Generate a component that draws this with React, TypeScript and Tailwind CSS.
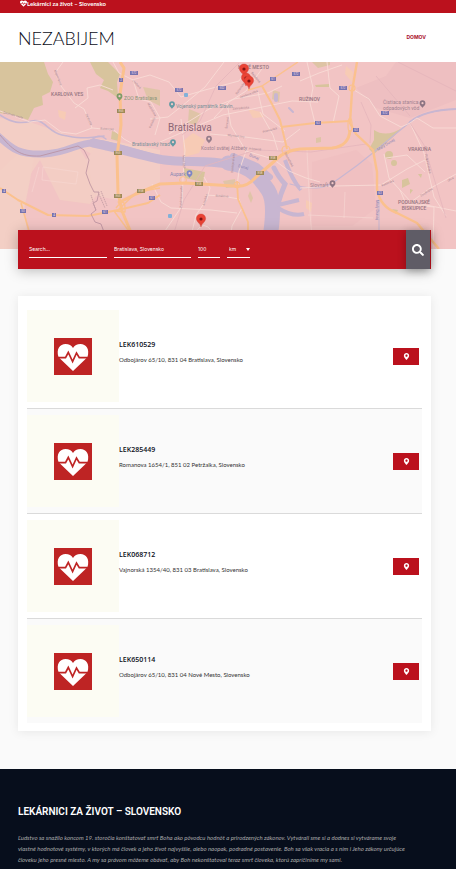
import { FaHeartbeat, FaMapMarkerAlt, FaSearch } from "react-icons/fa";

const places = [
  { id: "LEK610529", address: "Odbojárov 65/10, 831 04 Bratislava, Slovensko" },
  { id: "LEK285449", address: "Romanova 1654/1, 851 02 Petržalka, Slovensko" },
  { id: "LEK068712", address: "Vajnorská 1354/40, 831 03 Bratislava, Slovensko" },
  { id: "LEK650114", address: "Odbojárov 65/10, 831 04 Nové Mesto, Slovensko" },
];

const pins = [
  [244, 78],
  [246, 87],
  [249, 90],
  [201, 228],
];

// [x, y, label]
const blueSigns: [number, number, string][] = [
  [134, 73, "572"],
  [121, 80, "2"],
  [179, 90, "572"],
  [222, 88, "502"],
  [273, 79, "61"],
  [296, 74, "572"],
  [343, 88, "572"],
  [385, 113, "572"],
  [318, 123, "63"],
  [356, 130, "63"],
  [380, 193, "63"],
  [4, 191, "4"],
  [23, 211, "50"],
  [54, 215, "4"],
  [105, 212, "61"],
  [152, 198, "61"],
];

const greenSigns: [number, number, string][] = [
  [121, 111, "E65"],
  [118, 153, "E65"],
  [118, 196, "E65"],
  [141, 191, "E58"],
  [199, 184, "E58"],
  [260, 173, "E58"],
  [273, 158, "E58"],
];

// [x, y, rotation, name]
const streets: [number, number, number, string][] = [
  [57, 78, 68, "Majerníkova"],
  [88, 120, 66, "Devínska"],
  [107, 130, 4, "Botanická"],
  [13, 116, 16, "Devínska cesta"],
  [136, 85, 45, "Limbová"],
  [151, 110, 60, "Mudroňova"],
  [153, 123, -66, "Palisády"],
  [241, 89, -55, "Račianska"],
  [255, 78, 50, "Bajkalská"],
  [249, 95, -20, "Jarošova ulica"],
  [241, 109, -5, "Zahradnícka"],
  [228, 123, -82, "Šancová"],
  [236, 137, 6, "Mlynské nivy"],
  [270, 131, -15, "Prievozská"],
  [255, 150, 3, "Prístavná"],
  [288, 160, 62, "Slovnaftská"],
  [183, 162, 88, "Most SNP"],
  [234, 163, -84, "Dostojevského"],
  [182, 197, -88, "Panónska cesta"],
  [206, 200, -74, "Antolská"],
  [222, 197, 3, "Bosákova"],
  [388, 184, -22, "Kazanská"],
  [427, 193, -32, "Dvojkrížna"],
  [451, 180, -30, "Ulica"],
  [427, 164, 78, "Podpriehradná"],
];

function MapPin({ x, y }: { x: number; y: number }) {
  return (
    <g transform={`translate(${x} ${y})`}>
      <path
        d="M0 0C-.5-3.6-4.6-5-4.6-8.4a4.6 4.6 0 0 1 9.2 0C4.6-5 .5-3.6 0 0Z"
        transform="translate(0 -1)"
        fill="#ea4335"
        stroke="#cc3a32"
        strokeWidth=".4"
      />
      <circle cy="-9" r="1.6" fill="#7f1312" />
    </g>
  );
}

function PoiPin({ x, y, color }: { x: number; y: number; color: string }) {
  return (
    <g transform={`translate(${x} ${y})`} fill={color}>
      <path d="M0 4C-.4 2.3-2.9 1.8-2.9-.8a2.9 2.9 0 0 1 5.8 0C2.9 1.8.4 2.3 0 4Z" />
      <circle cy="-.8" r="1.1" fill="#f3c9c7" />
    </g>
  );
}

function CityMap() {
  return (
    <svg
      viewBox="0 62 456 187"
      preserveAspectRatio="xMidYMid slice"
      className="block aspect-[456/187] w-full"
      fontFamily="Roboto, sans-serif"
      role="img"
      aria-label="Bratislava"
    >
      <rect y="62" width="456" height="187" fill="#f2c4c4" />
      <path d="M0 118 30 122 70 136 108 140 160 150V180L135 190 98 158 78 146 50 156 20 148 0 138Z" fill="#f3cec5" />
      <path d="M0 140 30 156 78 146 90 166 96 196 90 204 60 200 40 160 30 175 22 196 28 249H0Z" fill="#f3cdc4" />
      <path d="M95 148 160 158V184L136 192 118 200 96 196 86 160Z" fill="#f3cdc6" />
      <path d="M396 62 386 76 356 88 376 108 410 118 456 100V62Z" fill="#eebfc1" />
      <path d="M312 162 356 150 372 164 376 208 352 226H312Z" fill="#f0c0c1" />
      <path d="M0 170 22 150 34 158 30 180 24 210 30 249H0Z" fill="#f3cfc5" />

      <g fill="#d8c49d">
        <path d="M0 62H44L48 74 53 82 50 92 42 96 43 105 34 108 28 120 17 116 0 113Z" />
        <path d="M90 62H108L120 74 117 82 118 98 108 91 100 88 104 80 96 74Z" />
        <path d="M112 131 119 134 118 141 111 139Z" />
        <path d="M143 87 160 90V106L148 100Z" opacity=".7" />
        <path d="M189 109 201 114 196 125 188 123Z" opacity=".75" />
        <path d="M184 168 205 172 203 182 185 178Z" />
        <path d="M273 90 280 92 279 102 272 99Z" opacity=".7" />
        <path d="M223 181 235 179 236 187 226 188Z" opacity=".7" />
        <path d="M250 191 253 198 251 203 248 196Z" opacity=".7" />
        <path d="M374 130Q386 138 402 128L392 138 374 154 369 149 374 140Z" />
        <circle cx="389" cy="155" r="4" />
        <circle cx="394" cy="163" r="3" />
        <path d="M402 180 408 178 410 184 402 188ZM410 189 413 190 410 194ZM418 174 422 174 421 178ZM392 209 398 210 396 214ZM315 85 329 84 329 87 316 87Z" />
        <path d="M312 62 330 62 330 65 318 68ZM316 138 321 137 321 142 316 143Z" opacity=".8" />
      </g>
      <g fill="#f7cbb5">
        <path d="M183 141 193 133 205 140 199 153 184 157Z" />
        <path d="M248 109 261 112 264 117 253 118Z" />
        <path d="M58 110 66 112 65 120 59 117Z" />
        <path d="M346 66 353 72 352 82 345 74Z" />
        <path d="M306 200 312 203 311 212 306 208Z" />
      </g>

      {/* water */}
      <g fill="none" stroke="#c8b6d1" strokeLinecap="round">
        <path d="M-3 135C12 149 19 155 44 154S76 143 93 143 136 153 160 159" strokeWidth="7" />
        <path d="M93 143C115 147 145 157 165 160S215 159 234 166" strokeWidth="9" />
        <path d="M228 163C250 165 260 178 268 190S272 232 266 256" strokeWidth="15" />
        <path d="M0 115C12 123 20 124 32 121S48 132 62 135 84 139 104 136" strokeWidth="1.6" />
        <path d="M90 142Q98 132 106 139" strokeWidth="1.4" />
        <path d="M233 156 257 166 270 177" strokeWidth="6" />
        <path d="M274 168Q279 178 285 184L281 194 278 204" strokeWidth="5" />
        <path d="M285 160Q292 180 301 190M278 205 299 200M278 208Q292 217 304 214" strokeWidth="4" strokeLinecap="butt" />
        <path d="M276 95V100" strokeWidth="4" />
        <path d="M289 108 293 112" strokeWidth="2" />
        <path d="M456 109C430 110 417 116 410 122S393 136 374 152 344 175 334 182 312 190 290 184" strokeWidth="1.2" />
        <path d="M456 109C430 110 417 116 410 122" strokeWidth="2" />
        <path d="M379 200V230" strokeWidth="1" />
      </g>

      {/* minor roads */}
      <g fill="none" stroke="#f8dbd6" strokeWidth=".9">
        <path d="M63 62 55 73 61 86 74 103 84 109 92 128 114 130 124 139 133 144" />
        <path d="M0 111 30 122 45 120 61 132 76 134 92 128" />
        <path d="M75 108 88 98 87 88 100 85 113 90" />
        <path d="M113 62 119 73 133 80 139 99 151 102 160 118 155 135" />
        <path d="M43 167 78 172 76 184 42 180ZM39 167 32 192" opacity=".5" />
        <path d="M132 80 150 75 169 82 181 97 205 90 239 81 251 64" />
        <path d="M150 119 168 117 182 106 205 87 224 62" />
        <path d="M169 134 188 122 209 109 234 99 268 93 282 86" />
        <path d="M160 142 190 129 223 115 292 101 318 102" />
        <path d="M181 119 185 150 183 178 182 206 165 231 155 249" />
        <path d="M227 103 231 126 246 151 239 171 237 186" />
        <path d="M210 134 245 137 283 142 300 129" />
        <path d="M214 118 229 102 246 91 264 66" />
        <path d="M246 151 273 159 289 171 306 178 320 182" />
        <path d="M260 112 273 135 278 151M258 92 263 114 285 131" />
        <path d="M152 184 161 202 171 208 211 210 237 213" />
        <path d="M204 177 210 188 207 199 196 215 188 249" />
        <path d="M205 195 222 196 239 199 242 208 232 226 229 249" />
        <path d="M188 249Q204 202 220 249" />
        <path d="M307 62 313 88 310 103 315 123M300 81 319 73 342 65M327 62 330 88 339 96 333 123" />
        <path d="M354 90 369 99 380 116 401 127 410 123 417 118 433 128 456 128" />
        <path d="M384 154 389 178 400 190 411 202 456 211" />
        <path d="M410 123 424 153 434 197 446 216M386 158 407 155 425 172" />
        <path d="M300 188 334 186 381 185 407 169 425 160" />
        <path d="M411 202 429 189 456 174M400 190 406 204 434 207 433 249" />
        <path d="M308 215 373 218M307 150 310 213 313 249" opacity=".6" />
        <path d="M345 192 344 218" opacity=".6" />
      </g>
      <g fill="none" stroke="#e5b5bb" strokeWidth=".8">
        <path d="M239 63 216 86 200 121 182 135" />
        <path d="M169 249 184 200 205 166 256 150 311 152 366 144" />
        <path d="M410 123 424 145 446 218" />
        <path d="M361 102 371 125 370 143M398 62 456 91M376 76 410 116" />
      </g>

      {/* motorways */}
      <g fill="none" stroke="#fbc18d" strokeLinejoin="round">
        <path d="M120 62 124 68 120 94 121 125 117 156 118 193 122 211 132 235" strokeWidth="3" />
        <path d="M0 188 18 200 48 215 88 216 118 210 148 203 160 195" strokeWidth="2" />
        <path d="M21 203 31 238" strokeWidth="1.6" />
        <path d="M118 203 136 194 160 184 185 183 234 186Q247 188 256 177L278 158Q285 151 300 149L332 148Q349 146 350 130" strokeWidth="3" />
        <path d="M118 210 137 192 160 188M116 208Q126 195 125 212L114 211 128 230" strokeWidth="1.4" />
        <path d="M262 86 272 104 280 120 287 149" strokeWidth="2" />
        <path d="M248 90 262 86 298 62" strokeWidth="1.5" />
        <path d="M281 127 315 123 350 121" strokeWidth="2" />
        <path d="M357 62 352 91 350 123 356 134 373 150 377 172 377 189Q380 207 397 213L417 223 439 249" strokeWidth="2.4" />
        <path d="M237 181 238 199 248 222 248 249" strokeWidth="1.8" />
        <circle cx="286" cy="150" r="4" strokeWidth="1.2" />
        <circle cx="352" cy="88" r="3" strokeWidth="1.2" />
        <circle cx="183" cy="180" r="3.4" strokeWidth="1" />
        <circle cx="237" cy="185" r="3" strokeWidth="1" />
        <ellipse cx="350" cy="125" rx="2" ry="7" strokeWidth="1.2" />
      </g>

      {/* state border */}
      <path
        d="M0 135C12 149 20 157 40 156L78 146 84 150 89 160 86 173 90 184 94 192 99 192 97 201 93 203 96 210 91 214 95 222 101 224 104 232"
        fill="none"
        stroke="#b98f9e"
        strokeWidth=".8"
      />
      <path d="M91 195 96 211M98 192 105 208M101 191 107 206" stroke="#c59fa6" strokeWidth=".9" strokeDasharray="1.5 .6" />

      {blueSigns.map(([x, y, label]) => (
        <g key={`${x}-${y}`}>
          <rect x={x - (label.length > 2 ? 4 : label.length > 1 ? 3 : 2)} y={y - 2} width={label.length > 2 ? 8 : label.length > 1 ? 6 : 4} height="4" fill="#7673ae" />
          <text x={x} y={y + 1} fontSize="3" textAnchor="middle" fill="#f0d9e3">{label}</text>
        </g>
      ))}
      {greenSigns.map(([x, y, label]) => (
        <g key={`${x}-${y}`}>
          <rect x={x - 4} y={y - 2} width="8" height="4" fill="#9d8a58" />
          <text x={x} y={y + 1} fontSize="3" textAnchor="middle" fill="#f3dfc8">{label}</text>
        </g>
      ))}
      {streets.map(([x, y, angle, name]) => (
        <text key={name + x} x={x} y={y} fontSize="3" textAnchor="middle" fill="#a98690" transform={`rotate(${angle} ${x} ${y})`}>
          {name}
        </text>
      ))}

      <g fill="#967480" fontSize="5" fontWeight="500">
        <text x="51" y="96">KARLOVA VES</text>
        <text x="238" y="69">NOVÉ MESTO</text>
        <text x="299" y="101">RUŽINOV</text>
        <text x="408" y="151">VRAKUŇA</text>
        <text x="414" y="204" textAnchor="middle">PODUNAJSKÉ</text>
        <text x="414" y="210" textAnchor="middle">BISKUPICE</text>
      </g>
      <text x="168" y="131" fontSize="10" fontWeight="400" fill="#8c6674">Bratislava</text>
      <g fill="#a18391" fontSize="5">
        <text x="201" y="150">Kostol svätej Alžbety</text>
        <text x="383" y="104">Čistiaca stanica</text>
        <text x="383" y="110">odpadových vôd</text>
        <text x="310" y="187">Slovnaft</text>
      </g>
      <g fontSize="5">
        <text x="124" y="100" fill="#8a9678">ZOO Bratislava</text>
        <text x="176" y="108" fill="#7a9199">Vojenský pamätník Slavín</text>
        <text x="132" y="146" fill="#7a9199">Bratislavský hrad</text>
        <text x="170" y="176" fill="#8585b3">Aupark</text>
      </g>
      <g fontSize="4" fill="#8c86b5">
        <text x="249" y="156" transform="rotate(22 249 156)">Dunaj</text>
        <text x="238" y="167" transform="rotate(14 238 167)">Dunaj</text>
        <text x="378" y="151" transform="rotate(-32 378 151)">Malý Dunaj</text>
        <text x="376" y="200" transform="rotate(90 376 200)">Malý Dunaj</text>
      </g>
      <PoiPin x={119.5} y={97} color="#7d9c68" />
      <PoiPin x={172} y={105} color="#649aa4" />
      <PoiPin x={173} y={143} color="#649aa4" />
      <PoiPin x={189.5} y={174} color="#7d86c5" />
      <PoiPin x={209} y={139.5} color="#967d8b" />
      <PoiPin x={422.5} y={104} color="#8d7483" />
      <PoiPin x={332.5} y={184} color="#8d7483" />
      <rect x="184" y="93" width="4" height="4" rx="1" fill="#83b1d8" />
      <rect x="168" y="214" width="4" height="4" rx="1" fill="#83b1d8" />

      {pins.map(([x, y]) => (
        <MapPin key={`${x}-${y}`} x={x} y={y} />
      ))}
    </svg>
  );
}

function HeartLogo() {
  return (
    <svg viewBox="0 0 38 37" className="h-[37px] w-[38px]" aria-hidden="true">
      <rect width="38" height="37" fill="#be2424" />
      <path d="M4.500 19C2 11 6 6 11.500 6 15 6 17.500 7.500 19 10 20.500 7.500 23 6 26.500 6 32 6 36 11 33.500 19L30 22.500 19 33 8 22.500Z" fill="#fff" />
      <path d="M3 19.700H11.500L14.300 14.500 18.600 23.500 22.500 15 25.300 19.700H35" fill="none" stroke="#be2424" strokeWidth="1.700" />
    </svg>
  );
}

export default function App() {
  return (
    <div className="bg-[#fafafa] font-['Lato',sans-serif] text-[6px] text-[#0a0d18]">
      <div className="flex h-[13px] items-start bg-[#bb111d] pl-5 font-bold leading-2 text-white">
        <FaHeartbeat className="size-[7px]" />
        <span>Lekárnici za život – Slovensko</span>
      </div>

      <header className="flex h-[49px] items-center justify-between bg-white pr-[30px] pl-[18px]">
        <a href="#" className="text-lg font-light">
          NEZABIJEM
        </a>
        <nav>
          <a href="#" className="block font-['Inter',sans-serif] text-[5px] font-bold text-[#a90f2b]">
            DOMOV
          </a>
        </nav>
      </header>

      <CityMap />

      <main className="pr-[25px] pb-[38px] pl-[18px]">
        <form
          className="relative -mt-[19px] flex h-[39px] items-center bg-[#bb111d] pr-px pl-[11px] font-['Inter',sans-serif] text-[5px] text-white shadow-[0_2px_12px_rgba(0,0,0,0.25)]"
          onSubmit={(e) => e.preventDefault()}
        >
          <div className="flex flex-1 gap-[7px]">
            <input
              aria-label="Search"
              placeholder="Search..."
              className="h-4 w-[78px] border-b border-white outline-none placeholder:text-white"
            />
            <input
              aria-label="Location"
              defaultValue="Bratislava, Slovensko"
              className="h-4 w-[77px] border-b border-white outline-none"
            />
            <input aria-label="Radius" defaultValue="100" className="h-4 w-[22px] border-b border-white outline-none" />
            <div className="relative">
              <select aria-label="Units" className="h-4 w-[23px] appearance-none border-b border-white pt-px pl-[2px] outline-none">
                <option>km</option>
                <option>mi</option>
              </select>
              <svg viewBox="0 0 4 3" className="pointer-events-none absolute top-[6px] right-0 h-[3px] w-1" aria-hidden="true">
                <path d="M0 0H4L2 3Z" fill="#fff" />
              </svg>
            </div>
          </div>
          <button
            type="submit"
            aria-label="Submit search"
            className="flex h-full w-6 items-center justify-center bg-[#5f5c66] shadow-[0_2px_8px_rgba(0,0,0,0.3)]"
          >
            <FaSearch className="size-3" />
          </button>
        </form>

        <ul className="mt-[27px] bg-white px-[9px] py-2 shadow-[0_1px_10px_rgba(0,0,0,0.08)]">
          {places.map((place) => (
            <li
              key={place.id}
              className="flex items-center border-b border-[#dadada] py-[6px] pr-[3px] last:border-b-0 even:bg-[#fafafa]"
            >
              <div className="flex size-[92px] items-center justify-center bg-[#fcfcf3]">
                <HeartLogo />
              </div>
              <div className="flex-1 pb-[6px]">
                <h3 className="font-['Open_Sans',sans-serif] text-[7px] leading-[14px] font-semibold">{place.id}</h3>
                <p className="leading-4 text-[#333]">{place.address}</p>
              </div>
              <button
                type="button"
                aria-label={`Show ${place.id} on map`}
                className="flex h-[17px] w-[26px] items-center justify-center bg-[#bb111d] text-white"
              >
                <FaMapMarkerAlt className="size-[7px]" />
              </button>
            </li>
          ))}
        </ul>
      </main>

      <footer className="bg-[#070e1c] pt-9 pr-[25px] pl-[18px] text-[#aaa]">
        <h2 className="font-['Roboto',sans-serif] text-[10px] leading-[14px] font-semibold text-white">
          LEKÁRNICI ZA ŽIVOT – SLOVENSKO
        </h2>
        <p className="mt-[13px] pb-1 leading-[11px] italic">
          Ľudstvo sa snažilo koncom 19. storočia konštatovať smrť Boha ako pôvodcu hodnôt a prirodzených zákonov. Vytvárali
          sme si a dodnes si vytvárame svoje
          <br />
          vlastné hodnotové systémy, v ktorých má človek a jeho život najvyššie, alebo naopak, podradné postavenie. Boh sa
          však vracia a s ním i Jeho zákony určujúce
          <br />
          človeku jeho presné miesto. A my sa právom môžeme obávať, aby Boh nekonštatoval teraz smrť človeka, ktorú
          zapríčiníme my sami.
        </p>
      </footer>
    </div>
  );
}
